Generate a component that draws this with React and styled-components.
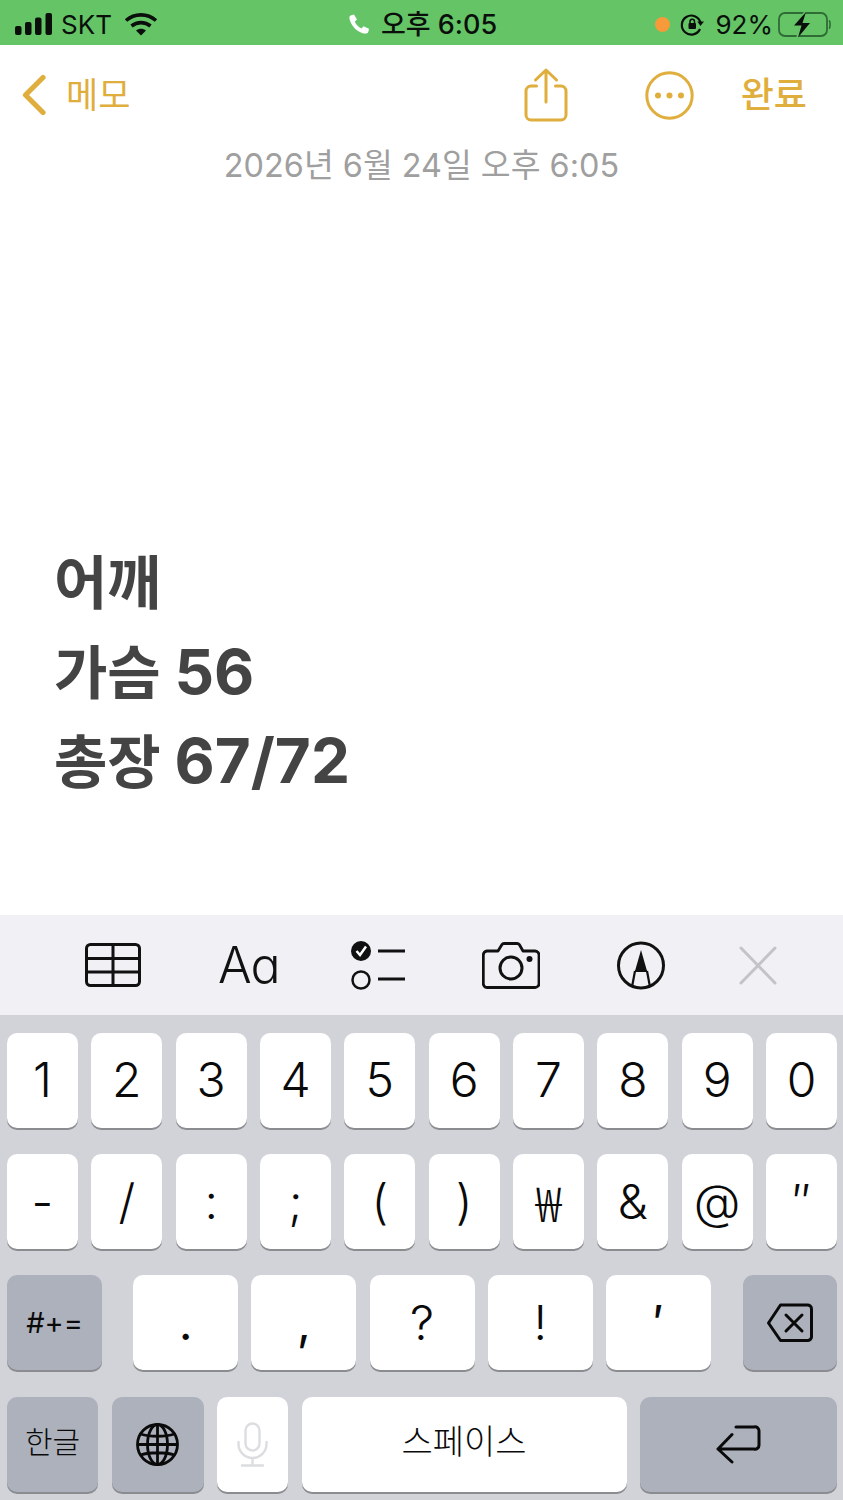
import React from "react";
import styled, { createGlobalStyle } from "styled-components";

const FONT = `Inter, "Noto Sans CJK KR", sans-serif`;
const GOLD = "#dfae3d";

const Global = createGlobalStyle`
  html, body { margin: 0; padding: 0; background: #fff; }
  * { box-sizing: border-box; }
`;

const Phone = styled.div`
  width: 843px; height: 1500px; overflow: hidden;
  display: flex; flex-direction: column;
  font-family: ${FONT}; background: #fff;
`;

const StatusBar = styled.header`
  height: 45px; flex: none; background: #64c466; color: #0b0f0b;
  display: grid; grid-template-columns: 1fr auto 1fr; align-items: center;
  padding: 1px 12px 0 15px;
`;
const StatusGroup = styled.div`
  display: flex; align-items: center; gap: ${p => p.$gap || 9}px;
  justify-content: ${p => (p.$end ? "flex-end" : "flex-start")};
`;
const StatusText = styled.span`
  font-size: ${p => p.$size || 26}px; font-weight: ${p => p.$weight || 400}; line-height: 44px;
  padding-top: 2px; white-space: nowrap;
`;
const Dot = styled.span`
  width: 15px; height: 15px; border-radius: 50%; background: #f79a3a; flex: none;
`;

const Nav = styled.nav`
  height: 100px; flex: none; display: flex; align-items: center;
  justify-content: space-between; padding: 0 36px 0 22px; color: ${GOLD};
`;
const NavGroup = styled.div`
  display: flex; align-items: center; gap: ${p => p.$gap}px;
`;
const NavLabel = styled.span`
  font-size: ${p => p.$size || 35}px; font-weight: ${p => p.$weight || 400}; line-height: 40px;
`;

const DateLine = styled.div`
  height: 40px; flex: none; text-align: center; line-height: 42px;
  font-size: 32.4px; color: #9f9f9f; font-weight: 400;
`;

const Note = styled.main`
  flex: 1; padding: 354px 0 0 54px; color: #444;
  font-size: 58px; font-weight: 700;
`;
const NoteLine = styled.div`
  height: 89.5px; line-height: 89.5px; white-space: nowrap;
`;
const NoteDigits = styled.span`
  font-size: 62px; font-weight: 700; line-height: 0;
`;

const Toolbar = styled.div`
  height: 100px; flex: none; background: #f1f1f5;
  display: flex; align-items: center; padding: 0 0 0 85px; color: #111;
`;
const ToolSlot = styled.div`
  display: flex; margin-left: ${p => p.$left || 0}px;
`;
const AaLabel = styled.span`
  width: 59px; font-size: 50px; line-height: 1; font-weight: 300; color: #111; white-space: nowrap;
  font-feature-settings: "cv11";
  letter-spacing: -1px;
`;

const Keyboard = styled.section`
  height: 485px; flex: none; background: #d1d3d9;
  padding: 18px 6px 0 7px; display: flex; flex-direction: column; gap: 26.2px;
`;
const KeyRow = styled.div`
  height: 95px; display: grid; grid-template-columns: repeat(10, 1fr); gap: 13.4px;
`;
const SpreadRow = styled.div`
  height: 95px; display: flex; justify-content: space-between;
`;
const CenterKeys = styled.div`
  display: grid; grid-template-columns: repeat(5, 105px); gap: 13.2px; margin-right: 1px;
`;
const BottomRow = styled.div`
  height: 95px; display: grid; grid-template-columns: 91px 92px 71px 325px 197px; gap: 13.5px;
`;
const Key = styled.div`
  border-radius: 10px; display: flex; align-items: center; justify-content: center;
  background: ${p => (p.$dark ? "#adb1bb" : "#fff")};
  box-shadow: 0 2px 0 #8b8c90;
  color: #0a0a0a; font-size: ${p => p.$size || 48}px; font-weight: ${p => p.$weight || 300};
  font-family: ${p => p.$font || FONT};
  width: ${p => (p.$width ? p.$width + "px" : "auto")};
  line-height: 1; padding-bottom: ${p => p.$lift || 0}px;
`;

const Signal = () => (
  <svg width="38" height="24" viewBox="0 0 38 24" fill="currentColor">
    <rect x="0" y="14" width="6.5" height="9" rx="2" />
    <rect x="10" y="10" width="6.5" height="13" rx="2" />
    <rect x="20" y="5.5" width="6.5" height="17.5" rx="2" />
    <rect x="30.5" y="1" width="6.5" height="22" rx="2" />
  </svg>
);
const Wifi = () => (
  <svg width="34" height="24" viewBox="0 0 34 24" fill="none" stroke="currentColor" strokeWidth="3.6">
    <path d="M2 8.5C10.500 1 23.500 1 32 8.500" />
    <path d="M7.500 14C13 9.500 21 9.500 26.500 14" />
    <path d="M12 18.600 17 23.500 22 18.600C19 16 15 16 12 18.600Z" fill="currentColor" stroke="none" />
  </svg>
);
const PhoneGlyph = () => (
  <svg width="21" height="20" viewBox="0 0 21 20" fill="#fff">
    <path d="M1.500 1.500 5 0.500 8 5.500 5.800 7.500C6.800 10.500 9.500 13 12.500 14.500L14.500 12.300 20 14.800 19.300 18C18.500 19.800 15.500 20 12.500 18.700 6.500 16.500 2.500 11.500 0.800 6 0 4 0.300 2.300 1.500 1.500Z" />
  </svg>
);
const RotationLock = () => (
  <svg width="25" height="25" viewBox="0 0 25 25" fill="none" stroke="currentColor" strokeWidth="2.200">
    <path d="M20.500 10.500A9.500 9.500 0 1 0 20 17" />
    <path d="M17.300 9.600H24L20.500 14Z" fill="currentColor" stroke="none" />
    <rect x="8.500" y="11" width="7.500" height="6" rx="1" fill="currentColor" stroke="none" />
    <path d="M10 11.500V9.500A2.200 2.200 0 0 1 14.500 9.500V11.500" strokeWidth="1.500" />
  </svg>
);
const Battery = () => (
  <svg width="53" height="27" viewBox="0 0 53 27" fill="none">
    <rect x="1" y="2" width="48" height="23" rx="6" stroke="#2f6b35" strokeWidth="1.800" />
    <path d="M51 9.500C52.500 10.500 52.500 16.500 51 17.500" stroke="#2f6b35" strokeWidth="1.600" />
    <path d="M28 -1 13 14.500H21L18 28 34 11.500H25.500Z" fill="#64c466" />
    <path d="M28 1 16 14.500H23.500L20 26.500 32 12H24.500Z" fill="#0b0f0b" />
  </svg>
);
const Chevron = () => (
  <svg width="24" height="42" viewBox="0 0 24 42" fill="none" stroke={GOLD} strokeWidth="5.200" strokeLinecap="round" strokeLinejoin="round">
    <path d="M21 3.500 3.500 21 21 38.500" />
  </svg>
);
const Share = () => (
  <svg width="44" height="54" viewBox="0 0 44 54" fill="none" stroke={GOLD} strokeWidth="3" strokeLinecap="round" strokeLinejoin="round">
    <path d="M12.500 18H7A5 5 0 0 0 2 23V47A5 5 0 0 0 7 52H37A5 5 0 0 0 42 47V23A5 5 0 0 0 37 18H31.500" />
    <path d="M22 34V2M11.500 12 22 2 32.500 12" />
  </svg>
);
const MoreCircle = () => (
  <svg width="49" height="49" viewBox="0 0 49 49" fill="none">
    <circle cx="24.500" cy="24.500" r="22.700" stroke={GOLD} strokeWidth="3" />
    <g fill={GOLD}>
      <circle cx="13" cy="24.500" r="3" /><circle cx="24.500" cy="24.500" r="3" /><circle cx="36" cy="24.500" r="3" />
    </g>
  </svg>
);
const TableIcon = () => (
  <svg width="56" height="44" viewBox="0 0 56 44" fill="none" stroke="currentColor" strokeWidth="3">
    <rect x="1.500" y="1.500" width="53" height="41" rx="4" />
    <path d="M1.500 15.500H54.500M1.500 29H54.500M28 1.500V42.500" />
  </svg>
);
const ChecklistIcon = () => (
  <svg width="54" height="49" viewBox="0 0 54 49" fill="none" stroke="currentColor">
    <circle cx="10" cy="10" r="10" fill="currentColor" stroke="none" />
    <path d="M5.500 10 9 14 15 5.500" stroke="#fff" strokeWidth="2.500" />
    <circle cx="10" cy="39" r="8.500" strokeWidth="2.500" />
    <path d="M27 10H54M27 38H54" strokeWidth="3" />
  </svg>
);
const CameraIcon = () => (
  <svg width="58" height="47" viewBox="0 0 58 47" fill="none" stroke="currentColor" strokeWidth="2.800" strokeLinejoin="round">
    <path d="M5 9H16L20 2.500C20.500 1.700 21 1.500 22 1.500H35C36 1.500 36.800 1.800 37.300 2.500L41 9H53A4 4 0 0 1 57 13V41A4 4 0 0 1 53 45.500H5A4 4 0 0 1 1.300 41V13A4 4 0 0 1 5 9Z" />
    <circle cx="29" cy="26" r="11" strokeWidth="3" />
    <circle cx="47.500" cy="17" r="3" fill="currentColor" stroke="none" />
  </svg>
);
const MarkupIcon = () => (
  <svg width="48" height="49" viewBox="0 0 48 49" fill="none" stroke="currentColor" strokeWidth="3">
    <circle cx="24" cy="24.500" r="22.500" />
    <path d="M24 9 18 30H30Z" fill="currentColor" stroke="none" />
    <path d="M18 30 15 46M30 30 33 46M18 30H30" strokeWidth="2.200" />
  </svg>
);
const CloseIcon = () => (
  <svg width="38" height="39" viewBox="0 0 38 39" fill="none" stroke="#c4c4c6" strokeWidth="3" strokeLinecap="round">
    <path d="M2 2 36 37M36 2 2 37" />
  </svg>
);
const DeleteIcon = () => (
  <svg width="46" height="39" viewBox="0 0 46 39" fill="none" stroke="#0a0a0a" strokeWidth="3" strokeLinejoin="round" strokeLinecap="round">
    <path d="M13.500 2H40A4 4 0 0 1 44.500 6V33A4 4 0 0 1 40 37.500H13.500L1.500 20Z" />
    <path d="M19 12 35 28M35 12 19 28" />
  </svg>
);
const GlobeIcon = () => (
  <svg width="43" height="43" viewBox="0 0 43 43" fill="none" stroke="#0a0a0a" strokeWidth="2.800">
    <circle cx="21.500" cy="21.500" r="20" />
    <ellipse cx="21.500" cy="21.500" rx="10" ry="20" />
    <path d="M21.500 1.500V41.500M1.500 21.500H41.500M4.500 11C14 14 29 14 38.500 11M4.500 32C14 29 29 29 38.500 32" />
  </svg>
);
const MicIcon = () => (
  <svg width="31" height="45" viewBox="0 0 31 45" fill="none" stroke="#dcdde0" strokeWidth="2.400" strokeLinecap="round">
    <rect x="8.500" y="1.500" width="14" height="27" rx="7" />
    <path d="M1.500 20V22A14 14 0 0 0 29.500 22V20M15.500 36V43M5 43.500H26" />
  </svg>
);
const ReturnIcon = () => (
  <svg width="45" height="39" viewBox="0 0 45 39" fill="none" stroke="#0a0a0a" strokeWidth="3" strokeLinecap="round" strokeLinejoin="round">
    <path d="M20 2H38A4 4 0 0 1 43 6V20A4 4 0 0 1 38 24H2M16 9.500 2 24 16 37" />
  </svg>
);

const NUMBERS = ["1", "2", "3", "4", "5", "6", "7", "8", "9", "0"];
const SYMBOLS = ["-", "/", ":", ";", "(", ")", "₩", "&", "@", "″"];
const PUNCT = [".", ",", "?", "!", "′"];
const CJK = `"Noto Sans CJK KR", sans-serif`;

export default function App() {
  return (
    <Phone>
      <Global />
      <StatusBar>
        <StatusGroup $gap={12}>
          <StatusGroup $gap={8}>
            <Signal />
            <StatusText>SKT</StatusText>
          </StatusGroup>
          <Wifi />
        </StatusGroup>
        <StatusGroup $gap={11}>
          <PhoneGlyph />
          <StatusText $size={27} $weight={500}>오후 6:05</StatusText>
        </StatusGroup>
        <StatusGroup $end $gap={5}>
          <StatusGroup $gap={10}>
            <Dot />
            <RotationLock />
            <StatusText>92%</StatusText>
          </StatusGroup>
          <Battery />
        </StatusGroup>
      </StatusBar>
      <Nav>
        <NavGroup $gap={20}>
          <Chevron />
          <NavLabel>메모</NavLabel>
        </NavGroup>
        <NavGroup $gap={77}>
          <Share />
          <NavGroup $gap={47}>
            <MoreCircle />
            <NavLabel $size={36} $weight={500}>완료</NavLabel>
          </NavGroup>
        </NavGroup>
      </Nav>
      <DateLine>2026년 6월 24일 오후 6:05</DateLine>
      <Note>
        <NoteLine>어깨</NoteLine>
        <NoteLine>가슴 <NoteDigits>56</NoteDigits></NoteLine>
        <NoteLine>총장 <NoteDigits>67/72</NoteDigits></NoteLine>
      </Note>
      <Toolbar>
        <TableIcon />
        <ToolSlot $left={77}><AaLabel>Aa</AaLabel></ToolSlot>
        <ToolSlot $left={74}><ChecklistIcon /></ToolSlot>
        <ToolSlot $left={77}><CameraIcon /></ToolSlot>
        <ToolSlot $left={77}><MarkupIcon /></ToolSlot>
        <ToolSlot $left={74}><CloseIcon /></ToolSlot>
      </Toolbar>
      <Keyboard>
        <KeyRow>
          {NUMBERS.map(k => <Key key={k} $lift={2}>{k}</Key>)}
        </KeyRow>
        <KeyRow>
          {SYMBOLS.map(k => <Key key={k} $font={k === "₩" ? CJK : undefined} $lift={k === "₩" ? 2 : 0}>{k}</Key>)}
        </KeyRow>
        <SpreadRow>
          <Key $dark $width={95} $size={29} $weight={400}>#+=</Key>
          <CenterKeys>
            {PUNCT.map(k => <Key key={k} $weight={k === "?" || k === "!" ? 300 : 400}>{k}</Key>)}
          </CenterKeys>
          <Key $dark $width={94}><DeleteIcon /></Key>
        </SpreadRow>
        <BottomRow>
          <Key $dark $size={30} $lift={4}>한글</Key>
          <Key $dark><GlobeIcon /></Key>
          <Key><MicIcon /></Key>
          <Key $size={34} $lift={4}>스페이스</Key>
          <Key $dark><ReturnIcon /></Key>
        </BottomRow>
      </Keyboard>
    </Phone>
  );
}
